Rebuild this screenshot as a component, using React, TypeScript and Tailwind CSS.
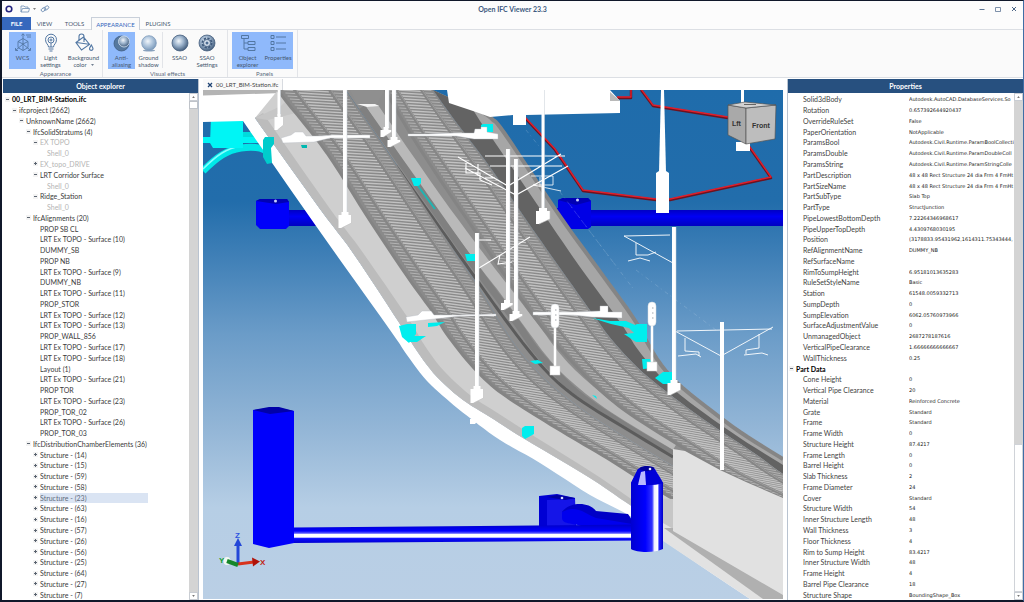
import type { ReactNode } from "react";

/* ---------- data ---------- */

type Node = { level: number; label: string; mark?: "+" | "-"; muted?: boolean; bold?: boolean; selected?: boolean };

const alignments = [
  "PROP SB CL", "LRT Ex TOPO - Surface (10)", "DUMMY_SB", "PROP NB", "LRT Ex TOPO - Surface (9)", "DUMMY_NB",
  "LRT Ex TOPO - Surface (11)", "PROP_STOR", "LRT Ex TOPO - Surface (12)", "LRT Ex TOPO - Surface (13)",
  "PROP_WALL_856", "LRT Ex TOPO - Surface (17)", "LRT Ex TOPO - Surface (18)", "Layout (1)",
  "LRT Ex TOPO - Surface (21)", "PROP TOR", "LRT Ex TOPO - Surface (23)", "PROP_TOR_02",
  "LRT Ex TOPO - Surface (26)", "PROP_TOR_03",
];
const structures = [14, 15, 59, 58, 23, 63, 16, 57, 26, 56, 25, 64, 27, 7];

const tree: Node[] = [
  { level: 0, label: "00_LRT_BIM-Station.ifc", mark: "-", bold: true },
  { level: 1, label: "ifcproject (2662)", mark: "-" },
  { level: 2, label: "UnknownName (2662)", mark: "-" },
  { level: 3, label: "IfcSolidStratums (4)", mark: "-" },
  { level: 4, label: "EX TOPO", mark: "-", muted: true },
  { level: 5, label: "Shell_0", muted: true },
  { level: 4, label: "EX_topo_DRIVE", mark: "+", muted: true },
  { level: 4, label: "LRT Corridor Surface", mark: "-" },
  { level: 5, label: "Shell_0", muted: true },
  { level: 4, label: "Ridge_Station", mark: "-" },
  { level: 5, label: "Shell_0", muted: true },
  { level: 3, label: "IfcAlignments (20)", mark: "-" },
  ...alignments.map((label) => ({ level: 4, label })),
  { level: 3, label: "IfcDistributionChamberElements (36)", mark: "-" },
  ...structures.map((n): Node => ({ level: 4, label: `Structure - (${n})`, mark: "+", selected: n === 23 })),
];

const indent = ["pl-[2px]", "pl-[9px]", "pl-[16px]", "pl-[23px]", "pl-[30px]", "pl-[37px]"];

const properties: [string, string][] = [
  ["Solid3dBody", "Autodesk.AutoCAD.DatabaseServices.So"],
  ["Rotation", "0.657392644920437"],
  ["OverrideRuleSet", "False"],
  ["PaperOrientation", "NotApplicable"],
  ["ParamsBool", "Autodesk.Civil.Runtime.ParamBoolCollecti"],
  ["ParamsDouble", "Autodesk.Civil.Runtime.ParamDoubleColl"],
  ["ParamsString", "Autodesk.Civil.Runtime.ParamStringColle"],
  ["PartDescription", "48 x 48 Rect Structure 24 dia Frm 4 FmHt"],
  ["PartSizeName", "48 x 48 Rect Structure 24 dia Frm 4 FmHt"],
  ["PartSubType", "Slab Top"],
  ["PartType", "StructJunction"],
  ["PipeLowestBottomDepth", "7.22264346968617"],
  ["PipeUpperTopDepth", "4.4309768030195"],
  ["Position", "(3178833.95431962,1614311.75343444,"],
  ["RefAlignmentName", "DUMMY_NB"],
  ["RefSurfaceName", ""],
  ["RimToSumpHeight", "6.95181013635283"],
  ["RuleSetStyleName", "Basic"],
  ["Station", "61548.0059332713"],
  ["SumpDepth", "0"],
  ["SumpElevation", "6062.05760973966"],
  ["SurfaceAdjustmentValue", "0"],
  ["UnmanagedObject", "2687278187616"],
  ["VerticalPipeClearance", "1.66666666666667"],
  ["WallThickness", "0.25"],
];
const partData: [string, string][] = [
  ["Cone Height", "0"],
  ["Vertical Pipe Clearance", "20"],
  ["Material", "Reinforced Concrete"],
  ["Grate", "Standard"],
  ["Frame", "Standard"],
  ["Frame Width", "0"],
  ["Structure Height", "87.4217"],
  ["Frame Length", "0"],
  ["Barrel Height", "0"],
  ["Slab Thickness", "2"],
  ["Frame Diameter", "24"],
  ["Cover", "Standard"],
  ["Structure Width", "54"],
  ["Inner Structure Length", "48"],
  ["Wall Thickness", "3"],
  ["Floor Thickness", "4"],
  ["Rim to Sump Height", "83.4217"],
  ["Inner Structure Width", "48"],
  ["Frame Height", "4"],
  ["Barrel Pipe Clearance", "18"],
  ["Structure Shape", "BoundingShape_Box"],
];

/* ---------- small shared parts ---------- */

function Mark({ kind }: { kind: "+" | "-" }) {
  return (
    <svg viewBox="0 0 5 5" className="size-[5px]" aria-hidden="true">
      <rect x="0" y="0" width="5" height="5" fill="#f3f3f3" />
      <path d={kind === "+" ? "M1 2.5h3M2.5 1v3" : "M1 2.5h3"} stroke="#5b6470" strokeWidth="1" />
    </svg>
  );
}

function ScrollBar({ thumb, name }: { thumb: "top" | "bottom"; name: string }) {
  const arrow = "flex h-2 w-full shrink-0 items-center justify-center border border-[#c9cdd3] bg-white";
  return (
    <div className="flex w-[9px] shrink-0 flex-col bg-[#d4d4d4]">
      <button aria-label={`Scroll ${name} up`} className={arrow}>
        <svg viewBox="0 0 4 3" className="h-[2px] w-[3px]"><path d="M0 3 2 0l2 3z" fill="#777" /></svg>
      </button>
      {thumb === "top" && <div className="h-2 shrink-0 border border-[#bfc3c9] bg-white" />}
      <div className="flex-[68]" />
      {thumb === "bottom" && <div className="flex-[29] border border-[#d0d3d8] bg-white" />}
      <button aria-label={`Scroll ${name} down`} className={arrow}>
        <svg viewBox="0 0 4 3" className="h-[2px] w-[3px]"><path d="M0 0h4L2 3z" fill="#777" /></svg>
      </button>
    </div>
  );
}

function PanelTitle({ children }: { children: ReactNode }) {
  return <h2 className="flex h-[14px] shrink-0 items-center justify-center bg-[#27507f] text-[7px] font-bold text-white">{children}</h2>;
}

/* ---------- ribbon icons ---------- */

const line = { fill: "none", stroke: "#5277a3", strokeWidth: 1 };

function WcsIcon() {
  return (
    <svg viewBox="0 0 20 20" className="size-5">
      <g {...line} strokeWidth=".9">
        <path d="M10 1v10M10 11l-7 6M10 11l7 6M10 5.500l5 3v6l-5 3-5-3v-6zM5 8.500l5 2.500 5-2.500M10 11v6.500" />
        <path d="M8.500 2.500 10 .7l1.500 1.800M2.500 15v2.500H5M17.500 15v2.500H15M13 2h5M14 4h4" />
      </g>
    </svg>
  );
}
function BulbIcon() {
  return (
    <svg viewBox="0 0 20 20" className="size-5">
      <g {...line}>
        <path d="M7.500 14c0-2.500-3-3.500-3-7.300a5.500 5.500 0 0 1 11 0c0 3.800-3 4.800-3 7.300zM7.500 16h5M8.500 18h3" />
        <circle cx="10" cy="7" r="3" /><circle cx="10" cy="7" r="1" />
        <path d="M10 10v4" />
      </g>
    </svg>
  );
}
function BucketIcon() {
  return (
    <svg viewBox="0 0 20 20" className="size-5">
      <g {...line} strokeWidth="1.100">
        <path d="M2 9.500 9.500 4l6 7.500L7.500 17zM2.500 9.500l12.500 1.800M5 7V3.500a2.500 2.500 0 0 1 5 0V9" />
        <path d="M17.300 12c1 1.800 1.700 2.800 1.700 4a1.800 1.800 0 0 1-3.500 0c0-1.200.8-2.200 1.800-4z" />
      </g>
    </svg>
  );
}
function SphereIcon({ kind }: { kind: "alias" | "ground" | "ssao" | "settings" }) {
  const dark = kind === "ground" ? "#7d9bbb" : "#46607f";
  return (
    <svg viewBox="0 0 20 20" className="size-5">
      <defs>
        <radialGradient id={`ball-${kind}`} cx=".42" cy=".38" r=".62">
          <stop offset="0" stopColor="#f1f6fb" />
          <stop offset=".5" stopColor={kind === "ground" ? "#b3c8de" : "#9ab1ca"} />
          <stop offset="1" stopColor={dark} />
        </radialGradient>
      </defs>
      {kind === "ground" && <ellipse cx="10" cy="17.500" rx="6" ry="1" fill="#8aa2bd" />}
      {kind !== "alias" && (
        <circle cx="10" cy="10" r={kind === "ground" ? 7.3 : 8} fill={`url(#ball-${kind})`} stroke={dark} strokeWidth=".8" />
      )}
      {kind === "alias" && (
        <>
          <circle cx="9.500" cy="10.500" r="7.500" fill="#56789e" stroke="#3d5c82" strokeWidth=".8" />
          <circle cx="12" cy="8.500" r="5.500" fill={`url(#ball-${kind})`} stroke="#d7e4f3" strokeWidth=".8" />
        </>
      )}
      {kind === "settings" && (
        <>
          <circle cx="10" cy="10" r="4.500" fill="none" stroke="#3f5a7c" strokeWidth="2" strokeDasharray="2.200 1.300" />
          <circle cx="10" cy="10" r="3.500" fill="#d8e2ee" stroke="#3f5a7c" strokeWidth=".8" />
          <circle cx="10" cy="10" r="1.500" fill="#4d6c92" />
        </>
      )}
    </svg>
  );
}
function ExplorerIcon() {
  return (
    <svg viewBox="0 0 20 20" className="size-5">
      <path d="M3.500 2.500h7v3h-7zM10 8.500h7v3h-7zM10 14.500h7v3h-7zM6 5.500V16h4M6 10h4" {...line} />
    </svg>
  );
}
function ListIcon() {
  return (
    <svg viewBox="0 0 20 20" className="size-5">
      <path d="M3 2.500h3v3H3zM3 8.500h3v3H3zM3 14.500h3v3H3zM8 4h10M8 10h10M8 16h10" {...line} />
    </svg>
  );
}

/* ---------- ribbon ---------- */

function Tool({ icon, label, active, width, menu }: { icon: ReactNode; label: [string, string?]; active?: boolean; width: string; menu?: boolean }) {
  return (
    <button className={`flex h-[37px] flex-col items-center pt-px text-[6px] leading-[7px] text-[#46586f] ${width} ${active ? "bg-[#8fb9fb]" : ""}`}>
      {icon}
      <span className="mt-px whitespace-nowrap">{label[0]}</span>
      {label[1] && (
        <span className="flex items-center gap-1 whitespace-nowrap">
          {label[1]}
          {menu && <svg viewBox="0 0 4 2" className="h-[2px] w-[3px]"><path d="M0 0h4L2 2z" fill="#46586f" /></svg>}
        </span>
      )}
    </button>
  );
}

function Group({ name, children, className }: { name: string; children: ReactNode; className: string }) {
  return (
    <section className={`flex flex-col items-center border-r border-[#e2e4e8] pt-[2px] ${className}`}>
      <div className="flex w-full">{children}</div>
      <span className="text-[6px] leading-[9px] text-[#5b6a7d]">{name}</span>
    </section>
  );
}

function Ribbon() {
  return (
    <div className="flex h-12 shrink-0 border-b border-[#dcdfe4] bg-[#fafafa]">
      <Group name="Appearance" className="w-[101px] pl-[7px]">
        <Tool icon={<WcsIcon />} label={["WCS"]} active width="w-[27px]" />
        <Tool icon={<BulbIcon />} label={["Light", "settings"]} width="w-[29px]" />
        <Tool icon={<BucketIcon />} label={["Background", "color"]} width="w-[37px]" menu />
      </Group>
      <Group name="Visual effects" className="w-[125px] pl-[5px]">
        <Tool icon={<SphereIcon kind="alias" />} label={["Anti-", "aliasing"]} active width="w-[27px]" />
        <Tool icon={<SphereIcon kind="ground" />} label={["Ground", "shadow"]} width="w-[27px]" />
        <div className="h-9 border-l border-[#e2e4e8]" />
        <Tool icon={<SphereIcon kind="ssao" />} label={["SSAO"]} width="w-[33px]" />
        <Tool icon={<SphereIcon kind="settings" />} label={["SSAO", "Settings"]} width="w-[22px]" />
      </Group>
      <Group name="Panels" className="w-[70px] pl-[4px]">
        <Tool icon={<ExplorerIcon />} label={["Object", "explorer"]} active width="w-[31px]" />
        <Tool icon={<ListIcon />} label={["Properties"]} active width="w-[30px]" />
      </Group>
    </div>
  );
}

function TitleBar() {
  return (
    <header className="grid h-4 shrink-0 grid-cols-[1fr_auto_1fr] items-center bg-[#fcfcfc] px-[3px]">
      <div className="flex items-center gap-[7px]">
        <svg viewBox="0 0 8 8" className="size-2"><circle cx="4" cy="4" r="2.800" fill="none" stroke="#23237f" strokeWidth="1.600" /></svg>
        <div className="flex items-center gap-1">
          <button aria-label="Open" className="flex items-center gap-[3px]">
            <svg viewBox="0 0 10 8" className="h-2 w-[10px]"><path d="M1 7V1h3l1 1h3v1.500M1 7l1.500-3.500H9.500L8.500 7z" fill="none" stroke="#6d8db3" strokeWidth=".8" /></svg>
            <svg viewBox="0 0 4 2" className="h-[2px] w-[3px]"><path d="M0 0h4L2 2z" fill="#555" /></svg>
          </button>
          <button aria-label="Link">
            <svg viewBox="0 0 10 8" className="h-2 w-[10px]"><g fill="none" stroke="#6d8db3" strokeWidth=".9"><rect x="1" y="3" width="5" height="3" rx="1.500" transform="rotate(-35 3.500 4.500)" /><rect x="4" y="1.500" width="5" height="3" rx="1.500" transform="rotate(-35 6.500 3)" /></g></svg>
          </button>
        </div>
      </div>
      <h1 className="text-[7px] font-bold text-[#3d5a80]">Open IFC Viewer 23.3</h1>
      <div className="flex items-center justify-end gap-2 pr-[2px]">
        <button aria-label="Minimize"><svg viewBox="0 0 8 8" className="size-2"><path d="M1.500 4.500h5" stroke="#5d7594" /></svg></button>
        <button aria-label="Maximize"><svg viewBox="0 0 8 8" className="size-2"><path d="M1.500 2.500h5v4h-5z" fill="none" stroke="#5d7594" strokeWidth=".8" /></svg></button>
        <button aria-label="Close"><svg viewBox="0 0 8 8" className="size-2"><path d="m2 2 4 4M6 2 2 6" stroke="#4a6485" /></svg></button>
      </div>
    </header>
  );
}

function MenuTabs() {
  const tab = "flex items-center justify-center text-[6px]";
  const plain = "border-b border-[#dcdfe4] text-[#46586f]";
  return (
    <nav className="flex h-[13px] shrink-0 bg-[#fcfcfc]">
      <button className={`${tab} w-[29px] bg-[#3668bd] font-bold text-white`}>FILE</button>
      <button className={`${tab} ${plain} w-[27px]`}>VIEW</button>
      <button className={`${tab} ${plain} w-[33px]`}>TOOLS</button>
      <button className={`${tab} w-[49px] border-x border-t border-[#c9d0da] bg-[#fafafa] text-[#3668bd]`}>APPEARANCE</button>
      <button className={`${tab} ${plain} w-[36px]`}>PLUGINS</button>
      <div className="flex-1 border-b border-[#dcdfe4]" />
    </nav>
  );
}

/* ---------- side panels ---------- */

function ObjectExplorer() {
  return (
    <aside className="ml-px flex w-[196px] shrink-0 flex-col border-r border-[#b9c3d0]">
      <PanelTitle>Object explorer</PanelTitle>
      <div className="flex min-h-0 flex-1">
        <ul className="grid min-w-0 flex-1 auto-rows-fr pt-px text-[7px] leading-[10px] text-[#3b3b3b]">
          {tree.map((n, i) => (
            <li key={i} className={`flex min-h-0 items-center gap-[2px] whitespace-nowrap ${indent[n.level]}`}>
              <span className="w-[5px] shrink-0">{n.mark && <Mark kind={n.mark} />}</span>
              <span className={`${n.muted ? "text-[#b4b4b4]" : ""} ${n.bold ? "font-bold text-black" : ""} ${n.selected ? "w-[108px] bg-[#dae4f3] text-[#5f6b7c]" : ""}`}>
                {n.label}
              </span>
            </li>
          ))}
        </ul>
        <ScrollBar thumb="top" name="object explorer" />
      </div>
    </aside>
  );
}

function PropertyRow({ row }: { row: [string, string] }) {
  return (
    <tr>
      <th scope="row" className="truncate p-0 pl-[15px] text-left font-normal text-[#3f3f3f]">{row[0]}</th>
      <td className="overflow-hidden p-0 font-['DejaVu_Sans',sans-serif] text-[5px] whitespace-nowrap text-[#222]">{row[1]}</td>
    </tr>
  );
}

function Properties() {
  return (
    <aside className="flex w-[236px] shrink-0 flex-col border-l border-[#b9c3d0]">
      <PanelTitle>Properties</PanelTitle>
      <div className="flex min-h-0 flex-1">
        <div className="min-w-0 flex-1 pt-px">
          <table className="h-full w-full table-fixed border-collapse text-[7px] leading-[10px]">
            <colgroup><col className="w-[121px]" /><col /></colgroup>
            <tbody>
              {properties.map((r) => <PropertyRow key={r[0]} row={r} />)}
              <tr>
                <th colSpan={2} scope="rowgroup" className="p-0 pl-px text-left font-bold text-black">
                  <span className="flex items-center gap-[2px]"><Mark kind="-" />Part Data</span>
                </th>
              </tr>
              {partData.map((r) => <PropertyRow key={r[0]} row={r} />)}
            </tbody>
          </table>
        </div>
        <ScrollBar thumb="bottom" name="properties" />
      </div>
    </aside>
  );
}

/* ---------- 3D scene ---------- */

type P = [number, number];

const poly = (pts: P[]) => pts.map((p) => `${p[0].toFixed(1)},${p[1].toFixed(1)}`).join(" ");
const band = (a: P[], b: P[]) => poly([...a, ...[...b].reverse()]);

/* Catmull-Rom through the given points */
function smooth(pts: P[]): P[] {
  const out: P[] = [];
  for (let i = 0; i < pts.length - 1; i++) {
    const [a, b, c, d] = [pts[Math.max(i - 1, 0)], pts[i], pts[i + 1], pts[Math.min(i + 2, pts.length - 1)]];
    for (let s = 0; s < 6; s++) {
      const t = s / 6;
      const f = (k: 0 | 1) =>
        0.5 * (2 * b[k] + (c[k] - a[k]) * t + (2 * a[k] - 5 * b[k] + 4 * c[k] - d[k]) * t * t + (3 * b[k] - a[k] - 3 * c[k] + d[k]) * t * t * t);
      out.push([f(0), f(1)]);
    }
  }
  out.push(pts[pts.length - 1]);
  return out;
}

function xAt(pts: P[], y: number): number {
  for (let i = 0; i < pts.length - 1; i++) {
    const [a, b] = [pts[i], pts[i + 1]];
    if (y <= b[1]) return a[0] + ((b[0] - a[0]) * (y - a[1])) / (b[1] - a[1]);
  }
  const [a, b] = [pts[pts.length - 2], pts[pts.length - 1]];
  return b[0] + ((b[0] - a[0]) * (y - b[1])) / (b[1] - a[1]);
}

const whiteOuter = smooth([[243, 121], [316, 226], [390, 330], [407, 355], [427, 381], [450, 402], [470, 418], [500, 440], [540, 463], [590, 495], [630, 516], [667, 543], [750, 599]]);
const whiteInner = smooth([[255, 118], [320, 209], [353, 253], [400, 324], [417, 351], [437, 377], [463, 400], [490, 417], [523, 438], [590, 478], [633, 507], [673, 530]]);
const curb = smooth([[263, 113], [328, 206], [361, 250], [408, 318], [425, 346], [444, 371], [470, 395], [496, 412], [529, 433], [593, 473], [636, 502], [673, 524]]);
const t1Left = smooth([[278, 90], [286, 101], [327, 153], [367, 216], [407, 276], [433, 312], [446, 333], [467, 360], [488, 382], [510, 399], [540, 418], [573, 438], [607, 458], [640, 479], [673, 499], [740, 540]]);
const t1Right = smooth([[346, 90], [388, 152], [432, 218], [478, 286], [501, 324], [522, 354], [548, 382], [583, 410], [623, 436], [673, 466], [740, 505]]);
const t2Left = smooth([[385, 90], [413, 138], [447, 190], [477, 234], [512, 286], [546, 332], [573, 363], [600, 390], [630, 414], [677, 444], [723, 472], [783, 499], [840, 524]]);
const t2Right = smooth([[433, 90], [453, 118], [490, 167], [527, 221], [567, 278], [597, 320], [612, 340], [637, 367], [663, 389], [703, 419], [757, 455], [783, 474], [840, 512]]);
const edge = smooth([[484, 113], [492, 119], [505, 134], [557, 212], [590, 258], [632, 316], [647, 342], [659, 362], [675, 381], [700, 402], [740, 432], [783, 459]]);
const edgeIn = smooth([[472, 108], [482, 124], [496, 144], [545, 216], [580, 267], [620, 322], [636, 347], [652, 367], [672, 388], [700, 410], [740, 438], [783, 465]]);
const medLeft = smooth([[366, 107], [413, 176], [476, 262], [500, 293], [527, 330], [545, 354], [563, 374], [590, 397], [617, 416], [673, 450]]);
const medRight = smooth([[378, 105], [441, 196], [490, 262], [514, 293], [540, 327], [557, 350], [575, 370], [600, 392], [625, 411], [677, 443]]);
const gutter = smooth([[362, 107], [407, 171], [467, 256], [496, 295], [519, 326], [535, 349], [557, 374], [583, 398], [625, 426], [673, 454]]);
const shadow = smooth([[396, 166], [440, 228], [484, 290], [507, 322], [530, 352], [553, 378], [583, 402], [630, 431], [673, 457]]);

function Track({ left, right }: { left: P[]; right: P[] }) {
  const end = right[right.length - 1][1];
  const rows: number[] = [];
  for (let y = 84; y < end + 30; y += 3) rows.push(y);
  const xMix = (y: number, k: number) => {
    const l = xAt(left, y);
    return l + (xAt(right, y) - l) * k;
  };
  const lean = (y: number) => 0.06 + Math.max(0, y - 180) * 0.0007;
  const ties = (a: number, b: number) =>
    rows.map((y) => {
      const x = xMix(y, a);
      const dy = (xMix(y, b) - x) * lean(y);
      const x2 = xMix(y + dy, b);
      return `M${x.toFixed(1)} ${y}L${x2.toFixed(1)} ${(y + dy).toFixed(1)}`;
    }).join("");
  const rail = (k: number) => poly(Array.from({ length: 90 }, (_, i): P => [xMix(84 + i * 5, k), 84 + i * 5]));
  return (
    <g fill="none">
      <polygon points={band(left, right)} fill="#8a8a8a" />
      <path d={ties(0.08, 0.22)} stroke="#b4b4b4" strokeWidth="1" />
      <path d={ties(0.28, 0.73)} stroke="#c2c2c2" strokeWidth="1.300" />
      <path d={ties(0.79, 0.96)} stroke="#b2b2b2" strokeWidth="1" />
      <polyline points={rail(0.25)} stroke="#868686" strokeWidth="3" />
      <polyline points={rail(0.27)} stroke="#a2a2a2" strokeWidth=".8" />
      <polyline points={rail(0.76)} stroke="#868686" strokeWidth="3" />
      <polyline points={rail(0.78)} stroke="#a2a2a2" strokeWidth=".8" />
      <polyline points={poly(left)} stroke="#848484" strokeWidth="3" />
    </g>
  );
}

function Pole({ x, y1, y2, w = 4 }: { x: number; y1: number; y2: number; w?: number }) {
  return (
    <g>
      <path d={`M${x} ${y1}V${y2}`} stroke="#fff" strokeWidth={w} />
      <path d={`M${x + w / 2} ${y1}V${y2}`} stroke="#c4ccd4" strokeWidth=".5" />
    </g>
  );
}

function Foot({ x, y, w = 13, h = 16 }: { x: number; y: number; w?: number; h?: number }) {
  return (
    <g fill="#fff">
      <path d={`M${x - w / 2 + 3} ${y - 3}h${w - 6}v4h${-(w - 6)}z`} />
      <path d={`M${x - w / 2} ${y}h${w}v${h - 5}l${-w + 3} 5h-3z`} />
      <path d={`M${x + w / 2} ${y}v${h - 5}l${-w + 3} 5`} fill="none" stroke="#bdbdbd" strokeWidth=".6" />
    </g>
  );
}

function Signal({ x, y, h }: { x: number; y: number; h: number }) {
  return (
    <g>
      <path d={`M${x} ${y + 15}V${y + h}`} stroke="#fff" strokeWidth="2.500" />
      <rect x={x - 4} y={y} width="8" height="24" rx="4" fill="#fff" stroke="#d5dade" strokeWidth=".5" />
      <path d={`M${x} ${y + 6}h1.500M${x} ${y + 11}h1.500M${x} ${y + 16}h1.500`} stroke="#a3a8ae" />
      <rect x={x - 5} y={y + h - 3} width="10" height="9" fill="#fff" stroke="#cfcfcf" strokeWidth=".5" />
    </g>
  );
}

function Scene() {
  return (
    <svg viewBox="203 90 580 509" preserveAspectRatio="xMidYMid slice" className="min-h-0 w-full flex-1" role="img" aria-label="Station model">
      <defs>
        <linearGradient id="sky" x1="0" y1="90" x2="0" y2="599" gradientUnits="userSpaceOnUse">
          <stop offset="0" stopColor="#1f6cab" /><stop offset=".22" stopColor="#226dab" />
          <stop offset=".33" stopColor="#4080b7" /><stop offset=".48" stopColor="#6b9cc8" />
          <stop offset=".66" stopColor="#92b5d6" /><stop offset=".82" stopColor="#b6cee5" />
          <stop offset="1" stopColor="#bacfe5" />
        </linearGradient>
        <linearGradient id="pipe" x1="0" y1="0" x2="0" y2="1">
          <stop offset="0" stopColor="#0000c8" /><stop offset=".35" stopColor="#0000ff" />
          <stop offset=".47" stopColor="#5a5aff" /><stop offset=".54" stopColor="#fff" />
          <stop offset=".68" stopColor="#fff" /><stop offset=".76" stopColor="#0a0aff" />
          <stop offset="1" stopColor="#0000d0" />
        </linearGradient>
        <linearGradient id="duct" x1="0" y1="0" x2="0" y2="1">
          <stop offset="0" stopColor="#0000c4" /><stop offset=".4" stopColor="#0000f4" /><stop offset="1" stopColor="#0000c0" />
        </linearGradient>
        <linearGradient id="shaft" x1="0" y1="0" x2="1" y2="0">
          <stop offset="0" stopColor="#0000d0" /><stop offset=".45" stopColor="#0000ff" />
          <stop offset=".66" stopColor="#3030ff" /><stop offset=".73" stopColor="#eeeeff" />
          <stop offset=".83" stopColor="#fff" /><stop offset=".88" stopColor="#2020ff" />
          <stop offset="1" stopColor="#0000c8" />
        </linearGradient>
      </defs>
      <rect x="203" y="90" width="580" height="509" fill="url(#sky)" />

      {/* red site boundary */}
      <g fill="none" stroke="#6d1320" strokeWidth="2.400" strokeLinejoin="round">
        <path d="M522 115 555 150 583 191 656 200 670 200 771 178 747 144M728 118 653 106 641 90M631 90v8h-14" />
        <path d="M522 114 555 149 583 190 656 199 670 199 771 177 747 143M728 117 653 105 641 89M631 90v7h-14" stroke="#e01f2b" strokeWidth="1.400" />
      </g>

      {/* utilities left of the deck */}
      <g fill="#00f5f5">
        <path d="M203 137h60v6h-60z" /><path d="M243 132h20v5h-20z" fill="#00dcdc" />
        <path d="M203 171c14-14 24-21 38-23s20 0 24 2" fill="none" stroke="#00e8e8" strokeWidth="7" />
        <path d="M203 169c14-14 24-21 38-23" fill="none" stroke="#86ffff" strokeWidth="1.500" />
        <path d="M211 117h32v31h-30l-3-5z" /><path d="M209 113h31l3 4v2h-32z" fill="#00b4b0" />
      </g>
      <path d="M288 210h32v16h-32z" fill="url(#duct)" />
      <path d="M256 201l4-2h27l2 3v24l-3 3h-26l-4-4z" fill="#0000fa" />
      <path d="M256 201l4-2h27l2 3-13 2z" fill="#0000b4" /><circle cx="275.500" cy="201" r="1.500" fill="#c8d0ff" />
      <path d="M575 210h208v16H575z" fill="url(#duct)" />
      <path d="M553 208h14l8 4v17h-8z" fill="#0000d8" /><path d="M558 200l5-2h25l3 3v26l-3 2h-22l-8-12z" fill="#0000e6" />
      <path d="M558 200l5-2h25l3 3-15 4z" fill="#0000b4" /><circle cx="577.500" cy="200" r="1.500" fill="#c8d0ff" />

      {/* deck */}
      <polygon points={band([[203, 95], [203, 122], ...whiteOuter], [[283, 90], [286, 100], ...whiteInner, [783, 590], [783, 599]])} fill="#fff" />
      <path d="M203 90h80l-1 3-79 2.500z" fill="#b4b4b4" />
      <polygon points={band(whiteInner, t1Left)} fill="#cfcfcf" />
      <polygon points={band(whiteInner, curb)} fill="#bcbcbc" />
      <polygon points="255,118 281,106 286,101 296,113 268,120" fill="#c6c6c6" />
      <polygon points={band(t1Right, t2Left)} fill="#8d8d8d" />
      <polygon points={band(t2Right, edge)} fill="#a6a6a6" />
      <polygon points={band(t2Right, edgeIn)} fill="#636363" />
      <polyline points={poly(edge)} fill="none" stroke="#858585" strokeWidth="4" />

      {/* median */}
      <polygon points={band(medLeft, medRight)} fill="#b9b9b9" />
      <polyline points={poly(gutter)} fill="none" stroke="#808080" strokeWidth="7" />
      <polyline points={poly(shadow)} fill="none" stroke="#5c5c5c" strokeWidth="3" />
      <path d="M350 90h35l-8 14h-20z" fill="#8f8f8f" /><path d="M357 104h18l4 2-12 1z" fill="#f4f4f4" />

      <Track left={t1Left} right={t1Right} />
      <Track left={t2Left} right={t2Right} />

      {/* abutment at the lower right */}
      <path d="M673 499v31l-35-24 15-8z" fill="#c6c6c6" />
      <path d="M663 523l120 69v7h-33l-87-58z" fill="#e2e2e2" />
      <path d="M664 528l10 0 109 65v6h-20z" fill="#b0b0b0" />
      <path d="M673 449l12 2 35 19 26 12 37 16v97l-110-64z" fill="#e1e1e1" />

      {/* upper platform */}
      <path d="M447 90l2 13 27 9 14 5 23-2v10h13v-10l94-2v-12l-10-11z" fill="#fff" />
      <path d="M610 92l10 9h-10z" fill="#b9b9b9" />

      {/* cyan fittings */}
      <g fill="#00eeee">
        <path d="M263 140l2-3h9v7l-3 4 1 15-5 1-4-7z" fill="#00cccc" /><path d="M301 145h6v3h-5z" fill="#00b8b0" />
        <path d="M411 178h10v5l-2 3h-5z" /><path d="M418 186l17 23" stroke="#1fb5b3" strokeWidth="2" />
        <path d="M465 254h10v7h-8z" /><path d="M481 125l2-1h10v8h-12z" />
        <path d="M399 326l8-2h9v10l-7 9-7-6z" /><path d="M428 323l17-1-8 4-9 1z" /><path d="M406 336l20 0-9 6h-9z" />
        <path d="M592 318l18 3 16 0 9 4 2-1h10v18h-11l-12-8 10-1-5-5-18-4z" />
        <path d="M642 359h8l3 9-10 1z" /><path d="M655 378l8-6h9v12l-9 0z" />
        <path d="M522 428l3-2h9v8l-9 5-3-3z" /><path d="M530 361l8-1 5 3-8 1z" /><path d="M592 395l4 1 1 3z" />
      </g>

      {/* cross arms carrying the boxes */}
      <g fill="#fff" stroke="#b6bcc2" strokeWidth=".4">
        <path d="M281 138l10-3 4-3h8l3 4 16 0 10-1h38v3h-40l-16 4-31 1z" /><path d="M408 134l20 0 26-1 20 0 1-4h6v-2h6v5l11 2v5l-24 0-18-3h-48z" />
        <path d="M406 317l12-2 4-4h9l3 4 24 0 38-1v2h-36l-17 2-36 4z" /><path d="M533 312l40 0 27-1v-5h8v6h14v6l-30-1-19-2h-40z" />
      </g>

      {/* overhead wires */}
      <g fill="none" stroke="#fff" strokeWidth="1.100">
        <path d="M458 157l50 29 53-32M465 168l51 27 52-29M485 156h80M490 166h72M466 163v10l14 0v7l12 5M478 164v12M485 178l10 0" />
        <path d="M531 176h22v9h-20l14 3 14 3M540 186v-9" strokeWidth=".8" />
        <path d="M479 268l51-31M479 240h12M500 255l-2 9 14-2" />
        <path d="M624 236l49 27M624 236l46-1M636 243v12l12 0 8-3M628 261l12-3 10 3" strokeWidth=".9" />
        <path d="M675 331l46 25 52-29M677 331l95-2M685 338v13l14 1v4M759 334v14l-13 2v4M678 356l18-2 5 3M744 355l18-2 6 2" strokeWidth=".9" />
      </g>
      <path d="M526 130l25 31M560 192l53 70M570 205l65 86M636 270l80 60" stroke="#dfe9f3" strokeOpacity=".3" strokeWidth=".6" strokeDasharray="4 3 1 4" fill="none" />

      {/* poles */}
      <Pole x={279} y1={90} y2={116} w={3} /><Foot x={279} y={117} w={9} h={13} />
      <Pole x={345} y1={90} y2={212} /><Foot x={345} y={215} w={13} h={13} />
      <Pole x={387} y1={90} y2={128} w={4} /><Foot x={386} y={130} w={11} h={7} />
      <Pole x={394} y1={90} y2={138} w={4} /><Foot x={394} y={140} w={13} h={7} />
      <Pole x={543} y1={90} y2={208} w={3} /><Foot x={543} y={211} w={14} h={13} />
      <Pole x={508} y1={149} y2={302} /><Foot x={507} y={303} w={12} h={7} />
      <Pole x={516} y1={159} y2={312} /><Foot x={516} y={314} w={13} h={7} />
      <Pole x={477} y1={233} y2={387} w={4} /><Foot x={477} y={389} w={13} h={14} />
      <Pole x={674} y1={227} y2={380} /><Foot x={674} y={383} w={13} h={12} />
      <path d="M722 322v148" stroke="#fff" strokeWidth="4" />
      <path d="M661 90h3l2 82h-7z" fill="#fff" /><path d="M656 173l3-2h7l3 2v40h-13z" fill="#fff" />
      <path d="M741 90h3v52h6v9h-14v-9h5z" fill="#fff" />
      <Signal x={555} y={304} h={65} /><Signal x={652} y={302} h={63} />
      <path d="M470 419h9l-4 5h-5z" fill="#fff" />

      {/* blue structures */}
      <path d="M253 410l16-2h10l15 3v132l-25 5-16-4z" fill="#0000fb" />
      <path d="M253 410l16-3h10l15 4-24 3z" fill="#0000a8" />
      <path d="M539 496l18-2 18 4 1 28h-37z" fill="#0000d4" /><path d="M547 500l28-1v27h-28z" fill="#1515e8" />
      <path d="M547 497l10-2 18 3-10 2z" fill="#0000a0" /><circle cx="562" cy="498" r="1.300" fill="#d6dcff" />
      <path d="M562 512c8-11 28-10 34-1l32 3 8 12h-40c-12-8-30-2-34-14z" fill="#0000c6" />
      <path d="M562 512c14-8 24 2 34 6l36 6v6h-42c-10-8-28-4-28-12z" fill="#0000ee" />
      <path d="M294 527.500l346-3v16l-346 2.500z" fill="url(#pipe)" />
      <path d="M631 483l7-14 8-3 9 3 8 14v66c-8 4-26 4-32 0z" fill="url(#shaft)" />
      <path d="M631 483l7-14 8-3 9 3 8 14c-8 3-24 3-32 0z" fill="#0000d8" />
      <path d="M641 472l4-1 1 14h-8z" fill="#b9b9ff" /><ellipse cx="647" cy="468.500" rx="7.500" ry="2.500" fill="#00009a" /><circle cx="650" cy="469" r="1.300" fill="#e8ebff" />

      {/* axis gizmo */}
      <g>
        <path d="M238 565V545" stroke="#2347d8" strokeWidth="3" /><path d="M234 546l4-8 4 8z" fill="#2347d8" />
        <path d="M238 564l16-2" stroke="#d8331c" strokeWidth="3" /><path d="M252 557.500l8 4-7 5z" fill="#b01208" />
        <ellipse cx="227" cy="561" rx="3.500" ry="4" fill="#f2f8f2" /><path d="M238 565l-11-4" stroke="#17862a" strokeWidth="4" />
        <g fontFamily="Liberation Sans, sans-serif" fontSize="8" fontWeight="700">
          <text x="235" y="538" fill="#2f55e0">Z</text><text x="260" y="565" fill="#c11f14">X</text><text x="219" y="563" fill="#14a032">Y</text>
        </g>
      </g>

      {/* view cube */}
      <g stroke="#555" strokeWidth=".7">
        <path d="M728 105l18 3v36l-18-9z" fill="#a9a9a9" /><path d="M746 108l30-3-1 34-29 5z" fill="#bdbdbd" /><path d="M728 105l17-3 31 3-30 3z" fill="#d2d2d2" />
      </g>
      <path d="M744 104.500h12" stroke="#666" />
      <g fontFamily="Liberation Sans, sans-serif" fontSize="7" fontWeight="700" fill="#333">
        <text x="752" y="128">Front</text><text x="732" y="126">Lft</text>
      </g>
    </svg>
  );
}

/* ---------- page ---------- */

export default function App() {
  return (
    <div className="flex h-screen flex-col overflow-hidden border-t border-r border-b-2 border-l-2 border-t-[#10182a] border-r-[#3f6ea5] border-b-[#10182a] border-l-[#10182a] bg-white font-['Lato','Noto_Sans',sans-serif]">
      <TitleBar />
      <MenuTabs />
      <Ribbon />
      <main className="flex min-h-0 flex-1 pt-px">
        <ObjectExplorer />
        <section className="flex min-w-0 flex-1 flex-col bg-white pr-1 pb-px pl-1">
          <div className="flex h-[11px] shrink-0 items-center">
            <button className="flex h-full items-center gap-[3px] border-r border-[#d8dbe0] bg-[#fafafa] px-1 text-[6px] text-[#444]">
              <svg viewBox="0 0 6 6" className="size-[6px]"><path d="m1 1 4 4M5 1 1 5" stroke="#1f4374" strokeWidth="1.300" /></svg>
              00_LRT_BIM-Station.ifc
            </button>
          </div>
          <Scene />
        </section>
        <Properties />
      </main>
    </div>
  );
}
